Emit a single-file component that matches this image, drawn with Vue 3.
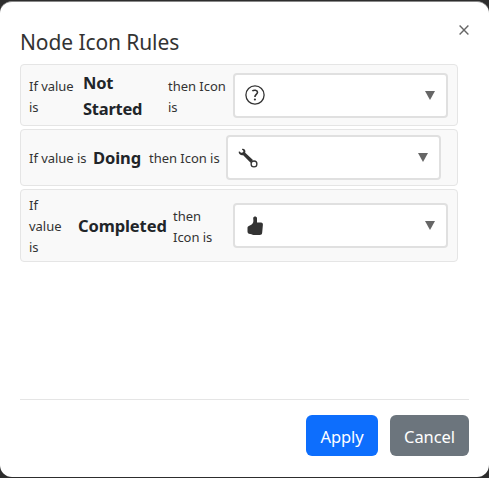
<template>
  <div class="backdrop">
    <div class="modal" role="dialog" aria-label="Node Icon Rules">
      <header class="modal-header">
        <h2 class="modal-title">Node Icon Rules</h2>
        <button class="modal-close" type="button" aria-label="Close">
          <svg width="10" height="10" viewBox="0 0 10 10">
            <path d="M.6.6l8.8 8.8M9.4.6L.6 9.4" fill="none" stroke="#666" stroke-width="1.4" />
          </svg>
        </button>
      </header>

      <div class="rules">
        <div v-for="rule in rules" :key="rule.icon" class="rule" :class="rule.icon">
          <span class="label before">If value is</span>
          <strong class="value">{{ rule.value }}</strong>
          <span class="label after">then Icon is</span>
          <button class="icon-select" type="button">
            <svg v-if="rule.icon === 'question'" class="glyph" width="20" height="20" viewBox="0 0 20 20">
              <circle cx="10" cy="10" r="9.1" fill="none" stroke="#333" stroke-width="1.3" />
              <path d="M7.3 6C8.8 4.7 12.5 4.9 12.5 7.3C12.5 9.4 9.9 9.4 9.9 12" fill="none" stroke="#333" stroke-width="1.6" />
              <circle cx="9.9" cy="14.5" r="1.1" fill="#333" />
            </svg>
            <svg v-else-if="rule.icon === 'wrench'" class="glyph" width="20" height="20" viewBox="0 0 20 20">
              <path d="M4.2.7C6.8.5 8 2.6 7.2 4.7L15 12.1L12.6 14.8L5.2 7.2C3 7.7.7 6.4.6 3.8L1.8 3.5C2.5 5 4.1 5.1 5 4.3C5.8 3.3 5.4 2.1 4 1.7Z" fill="#333" />
              <circle cx="16" cy="15.9" r="2.9" fill="#fff" stroke="#333" stroke-width="1.3" />
            </svg>
            <svg v-else class="glyph" width="20" height="20" viewBox="0 0 20 20">
              <path d="M8.2 2C8.6 0 11.6 0 12 2V6.4L16 6.5C17.4 6.6 18 7.4 17.9 8.8L17.2 16.6C17 18.4 16.3 19.1 14.6 19.1H9.8C8 19.1 7 18.5 5.2 18.1C3.2 17.7 2.6 17.1 2.5 15.5V12C2.5 10.5 3.3 10.1 4.8 9.5C7 8.6 8.3 7.4 8.4 5Z" fill="#333" />
            </svg>
            <svg class="caret" width="10" height="9" viewBox="0 0 10 9">
              <path d="M0 0h10L5 9z" fill="#666" />
            </svg>
          </button>
        </div>
      </div>

      <footer class="modal-footer">
        <button class="btn primary" type="button">Apply</button>
        <button class="btn secondary" type="button">Cancel</button>
      </footer>
    </div>
  </div>
</template>

<script setup>
import { ref } from 'vue'

const rules = ref([
  { value: 'Not Started', icon: 'question' },
  { value: 'Doing', icon: 'wrench' },
  { value: 'Completed', icon: 'thumb' }
])
</script>

<style>
body {
  margin: 0;
  background: #2d2d2d;
}
</style>

<style scoped>
.backdrop {
  box-sizing: border-box;
  height: 478px;
  padding: 1px 0;
  background: #2d2d2d;
  font-family: "Segoe UI", "Noto Sans", sans-serif;
  color: #333;
}

.modal {
  box-sizing: border-box;
  height: 476px;
  padding: 0 20px 21px;
  display: flex;
  flex-direction: column;
  border-radius: 12px;
  border-top: 1px solid #888;
  background: #fff;
}

.modal-header {
  height: 62px;
  display: flex;
  justify-content: space-between;
  align-items: flex-start;
}

.modal-title {
  margin: 25px 0 0;
  font-size: 21px;
  line-height: 30px;
  font-weight: 400;
  letter-spacing: -0.1px;
}

.modal-close {
  display: flex;
  margin: 23px 0 0;
  padding: 0;
  border: none;
  background: none;
  cursor: pointer;
}

.rules {
  flex: 1;
}

.rule {
  box-sizing: border-box;
  width: 438px;
  height: 62px;
  margin-bottom: 3px;
  padding-left: 8px;
  display: flex;
  align-items: center;
  border: 1px solid #e5e5e5;
  border-radius: 4px;
  background: #f9f9f9;
}

.rule.wrench {
  height: 57px;
}

.rule.thumb {
  height: 73px;
}

.label {
  flex: none;
  padding-top: 2px;
  font-size: 13px;
  line-height: 21px;
  letter-spacing: -0.03px;
}

.value {
  flex: none;
  font-size: 16.5px;
  line-height: 26px;
  font-weight: 700;
  letter-spacing: -0.1px;
  color: #212529;
}

.question .label { padding-top: 4px; }
.question .before { width: 54px; }
.question .value { width: 85px; padding-top: 2px; letter-spacing: -0.25px; }
.question .after { width: 65px; }

.wrench .label,
.wrench .value {
  white-space: nowrap;
}
.wrench .before { width: 64px; }
.wrench .value { width: 56px; }
.wrench .after { width: 77px; }

.thumb .before { width: 49px; padding-right: 12px; box-sizing: border-box; }
.thumb .value { width: 95px; }
.thumb .after { width: 60px; padding-right: 14px; box-sizing: border-box; }

.icon-select {
  box-sizing: border-box;
  flex: none;
  width: 215px;
  height: 45px;
  padding: 0 11px 0 10px;
  display: flex;
  align-items: center;
  justify-content: space-between;
  border: 2px solid #e0e0e0;
  border-radius: 4px;
  background: #fff;
  cursor: pointer;
}

.modal-footer {
  box-sizing: border-box;
  height: 57px;
  padding-top: 15px;
  display: flex;
  justify-content: flex-end;
  gap: 12px;
  border-top: 1px solid #e5e5e5;
}

.btn {
  height: 41px;
  padding: 2px 0 0;
  border: none;
  border-radius: 6px;
  font-family: inherit;
  font-size: 16.5px;
  letter-spacing: -0.1px;
  color: #fff;
  cursor: pointer;
}

.btn.primary {
  width: 72px;
  background: #0d6efd;
}

.btn.secondary {
  width: 79px;
  background: #6c757d;
}
</style>
